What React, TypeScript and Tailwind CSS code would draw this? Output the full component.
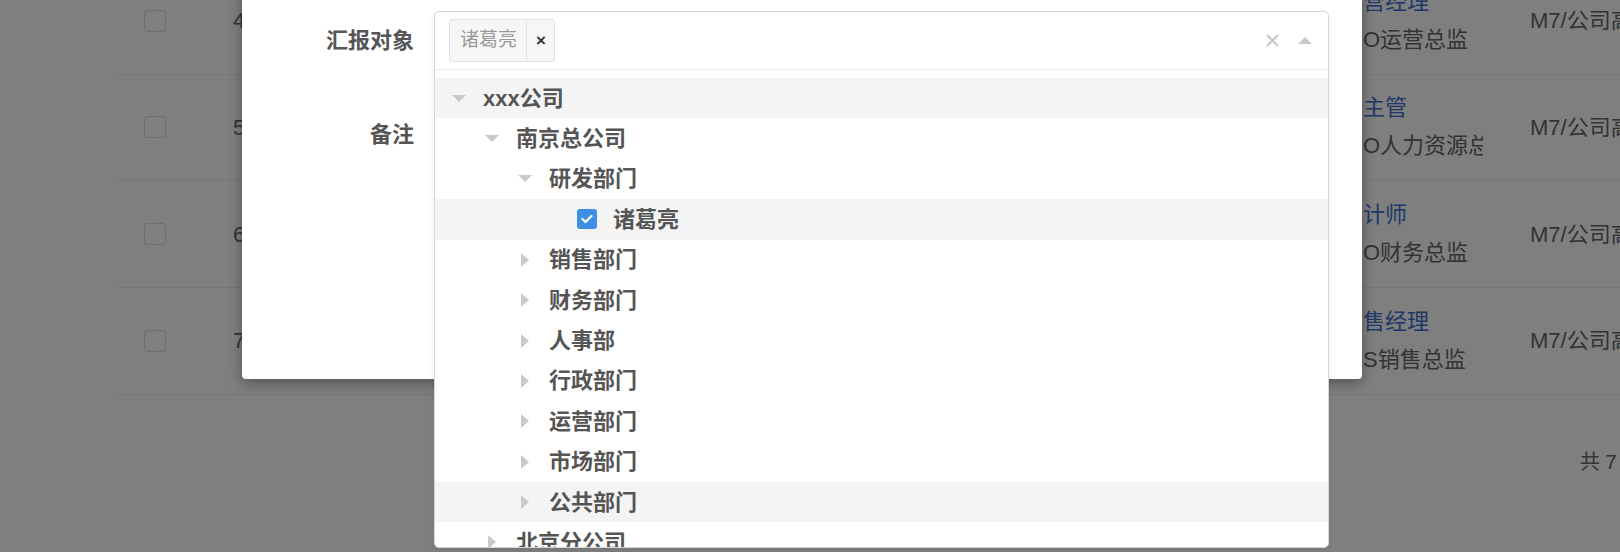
const font = { fontFamily: '"Liberation Sans", "Noto Sans CJK SC", sans-serif' };

type Node = { label: string; level: number; kind: "open" | "closed" | "leaf"; active?: boolean; checked?: boolean };

const tree: Node[] = [
  { label: "xxx公司", level: 0, kind: "open", active: true },
  { label: "南京总公司", level: 1, kind: "open" },
  { label: "研发部门", level: 2, kind: "open" },
  { label: "诸葛亮", level: 3, kind: "leaf", active: true, checked: true },
  { label: "销售部门", level: 2, kind: "closed" },
  { label: "财务部门", level: 2, kind: "closed" },
  { label: "人事部", level: 2, kind: "closed" },
  { label: "行政部门", level: 2, kind: "closed" },
  { label: "运营部门", level: 2, kind: "closed" },
  { label: "市场部门", level: 2, kind: "closed" },
  { label: "公共部门", level: 2, kind: "closed", active: true },
  { label: "北京分公司", level: 1, kind: "closed" },
];

const rows = [
  { no: "4", title: "营经理", sub: "O运营总监", rank: "M7/公司高管" },
  { no: "5", title: "主管", sub: "O人力资源总监", rank: "M7/公司高管" },
  { no: "6", title: "计师", sub: "O财务总监", rank: "M7/公司高管" },
  { no: "7", title: "售经理", sub: "S销售总监", rank: "M7/公司高管" },
];

function Caret({ kind }: { kind: Node["kind"] }) {
  if (kind === "open") {
    return (
      <svg width="14" height="7" viewBox="0 0 14 7">
        <path d="M0 0 L14 0 L7 7 Z" fill="#c9c9c9" />
      </svg>
    );
  }
  if (kind === "closed") {
    return (
      <svg width="8" height="14" viewBox="0 0 8 14">
        <path d="M0 0 L8 7 L0 14 Z" fill="#c9c9c9" />
      </svg>
    );
  }
  return null;
}

function TreeRow({ node }: { node: Node }) {
  return (
    <div className={`flex items-center h-[40.4px] pl-[12px] ${node.active ? "bg-[#f4f4f4]" : ""}`}>
      {Array.from({ length: node.level }).map((_, i) => (
        <div key={i} className="w-[33px] shrink-0" />
      ))}
      <div className="w-[24px] flex items-center justify-center shrink-0">
        <Caret kind={node.kind} />
      </div>
      {node.kind === "leaf" && (
        <div className="ml-[7px] w-[20px] h-[20px] rounded-[3px] bg-[#3d8fe5] flex items-center justify-center">
          {node.checked && (
            <svg width="12" height="10" viewBox="0 0 12 10">
              <path d="M1.5 5 L4.5 8 L10.5 2" stroke="white" strokeWidth="2.2" fill="none" strokeLinecap="round" strokeLinejoin="round" />
            </svg>
          )}
        </div>
      )}
      <span className={`${node.kind === "leaf" ? "ml-[16px]" : "ml-[12px]"} text-[22px] font-semibold text-[#555]`}>
        {node.label}
      </span>
    </div>
  );
}

export default function App() {
  return (
    <div className="relative w-[1620px] h-[552px] overflow-hidden bg-white" style={font}>
      {/* table under the mask */}
      <div className="ml-[115px] -mt-[32px]">
        {rows.map((r) => (
          <div key={r.no} className="grid grid-cols-[118px_1130px_167px_1fr] items-center h-[106.67px] border-b border-[#eeeeee]">
            <div className="pl-[29px]">
              <div className="w-[22px] h-[22px] border border-[#dddddd] rounded-[3px] bg-white" />
            </div>
            <div className="text-[22px] text-[#666]">{r.no}</div>
            <div className="w-[120px] overflow-hidden flex flex-col text-[22px] leading-[38px] whitespace-nowrap">
              <span className="text-[#3d72cf]">{r.title}</span>
              <span className="text-[#666]">{r.sub}</span>
            </div>
            <div className="text-[22px] text-[#666] whitespace-nowrap">{r.rank}</div>
          </div>
        ))}
        <div className="ml-[1465px] pt-[52px] leading-[30px] text-[20px] text-[#666] whitespace-nowrap">共 7 条</div>
      </div>

      {/* mask */}
      <div className="absolute inset-0 bg-black/50" />

      {/* modal */}
      <div className="absolute left-[242px] top-[-20px] w-[1120px] h-[399px] bg-white rounded-[4px] shadow-[0_4px_14px_rgba(0,0,0,0.35)] pt-[31px]">
        <div className="flex">
          <div className="w-[172px] h-[58px] flex items-center justify-end text-[22px] font-semibold text-[#555]">汇报对象</div>
          <div className="relative ml-[20px] w-[895px] h-[58px]">
            <div className="absolute left-0 top-0 w-full h-[537px] bg-white border border-[#d6d6d6] rounded-[5px] overflow-hidden z-10 shadow-[0_2px_6px_rgba(0,0,0,0.08)]">
              <div className="h-[58px] flex items-center border-b border-[#ececec] pl-[14px] pr-[16px]">
                <div className="flex items-stretch h-[43px] border border-[#e2e2e2] bg-[#f6f6f6] rounded-[3px]">
                  <span className="flex items-center pl-[10px] pr-[9px] text-[19px] text-[#999]">诸葛亮</span>
                  <span className="flex items-center border-l border-[#e4e4e4] pl-[9px] pr-[8px] text-[17px] font-bold text-[#333]">×</span>
                </div>
                <div className="flex-1" />
                <svg width="13" height="13" viewBox="0 0 13 13">
                  <path d="M1 1 L12 12 M12 1 L1 12" stroke="#c6c6c6" strokeWidth="2" />
                </svg>
                <svg className="ml-[19px]" width="14" height="7" viewBox="0 0 14 7">
                  <path d="M0 7 L7 0 L14 7 Z" fill="#c9c9c9" />
                </svg>
              </div>
              <div className="pt-[8px]">
                {tree.map((n, i) => (
                  <TreeRow key={i} node={n} />
                ))}
              </div>
            </div>
          </div>
        </div>
        <div className="flex mt-[51px]">
          <div className="w-[172px] text-right text-[22px] leading-[30px] font-semibold text-[#555]">备注</div>
          <div className="ml-[20px] w-[895px] h-[120px] border border-[#d6d6d6] rounded-[4px]" />
        </div>
      </div>
    </div>
  );
}
